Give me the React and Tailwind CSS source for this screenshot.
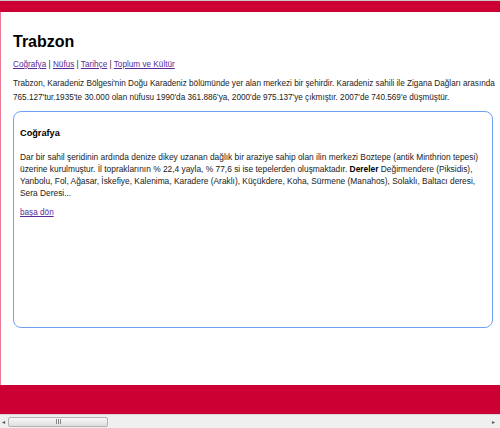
const links = ['Coğrafya', 'Nüfus', 'Tarihçe', 'Toplum ve Kültür'];

function ScrollBar() {
  return (
    <div className="flex h-[14px] items-center border-t border-[#d6d6d6] bg-[#efefef]">
      <span className="w-[8px] pl-[2px] text-[6px] leading-none text-[#555]">◂</span>
      <div className="relative flex h-[10px] w-[100px] items-center justify-center rounded-[2px] border border-[#b4b4b4] bg-gradient-to-b from-[#f8f8f8] to-[#dedede]">
        <div className="flex gap-[1px]">
          <span className="h-[5px] w-[1px] bg-[#888]" />
          <span className="h-[5px] w-[1px] bg-[#888]" />
          <span className="h-[5px] w-[1px] bg-[#888]" />
        </div>
      </div>
      <div className="flex-1" />
      <span className="w-[8px] text-[6px] leading-none text-[#555]">▸</span>
    </div>
  );
}

export default function App() {
  return (
    <div className="flex h-[428px] w-[500px] flex-col overflow-hidden bg-white font-['Liberation_Sans',Arial,sans-serif] text-[#222]">
      <div className="h-[12px] border-t border-[#c8c8c8] bg-[#cc0033]" />

      <div className="flex-1 border-l border-[#ea7a95] pl-[12px]">
        <h1 className="mt-[21px] text-[16px] font-bold leading-[18px] text-black">Trabzon</h1>

        <p className="mt-[8px] text-[8.2px] leading-[12px]">
          {links.map((label, i) => (
            <span key={label}>
              {i > 0 && ' | '}
              <a href="#" className="text-[#5a2a98] underline">{label}</a>
            </span>
          ))}
        </p>

        <p className="mt-[6px] whitespace-nowrap text-[8.2px] leading-[13.7px]">
          Trabzon, Karadeniz Bölgesi'nin Doğu Karadeniz bölümünde yer alan merkezi bir şehirdir. Karadeniz sahili ile Zigana Dağları arasında
          <br />
          765.127'tur.1935'te 30.000 olan nüfusu 1990'da 361.886'ya, 2000'de 975.137'ye çıkmıştır. 2007'de 740.569'e düşmüştür.
        </p>

        <div className="mt-[7px] h-[217px] w-[480px] rounded-[8px] border border-[#6ea2f7] px-[6px] pt-[15px]">
          <h2 className="text-[9.2px] font-bold leading-[12px] text-black">Coğrafya</h2>
          <p className="mt-[12px] whitespace-nowrap text-[8.4px] leading-[12px]">
            Dar bir sahil şeridinin ardında denize dikey uzanan dağlık bir araziye sahip olan ilin merkezi Boztepe (antik Minthrion tepesi)
            <br />
            üzerine kurulmuştur. İl topraklarının % 22,4 yayla, % 77,6 si ise tepelerden oluşmaktadır. <b className="text-black">Dereler</b> Değirmendere (Piksidis),
            <br />
            Yanbolu, Fol, Ağasar, İskefiye, Kalenima, Karadere (Araklı), Küçükdere, Koha, Sürmene (Manahos), Solaklı, Baltacı deresi,
            <br />
            Sera Deresi...
          </p>
          <p className="mt-[8px] text-[8.2px] leading-[12px]">
            <a href="#" className="text-[#5a2a98] underline">başa dön</a>
          </p>
        </div>
      </div>

      <div className="h-[29px] bg-[#cc0033]" />
      <ScrollBar />
    </div>
  );
}
